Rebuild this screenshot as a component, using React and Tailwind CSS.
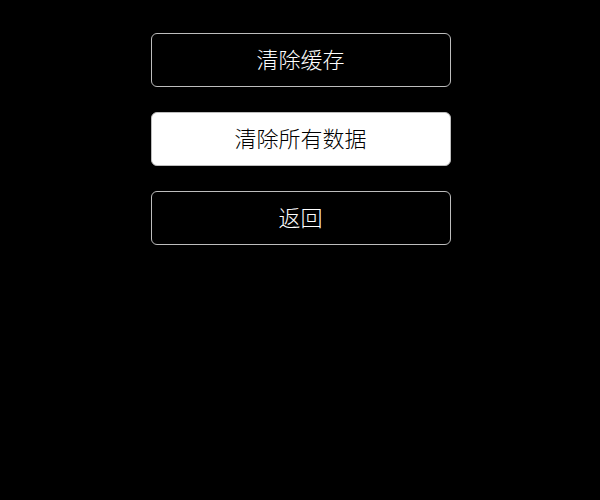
import React from "react";

export default function App() {
  return (
    <div
      className="w-[600px] h-[500px] bg-black flex flex-col items-center pt-[33px] gap-[25px]"
      style={{ fontFamily: '"Noto Sans CJK SC", "Noto Sans", sans-serif' }}
    >
      <button className="w-[300px] h-[54px] rounded-[6px] border border-[#bdbdbd] bg-black text-white text-[22px] font-light ml-[1px] pb-1">
        清除缓存
      </button>
      <button className="w-[300px] h-[54px] rounded-[6px] border border-[#bdbdbd] bg-white text-black text-[22px] font-light ml-[1px] pb-1">
        清除所有数据
      </button>
      <button className="w-[300px] h-[54px] rounded-[6px] border border-[#bdbdbd] bg-black text-white text-[22px] font-light ml-[1px] pb-1">
        返回
      </button>
    </div>
  );
}
